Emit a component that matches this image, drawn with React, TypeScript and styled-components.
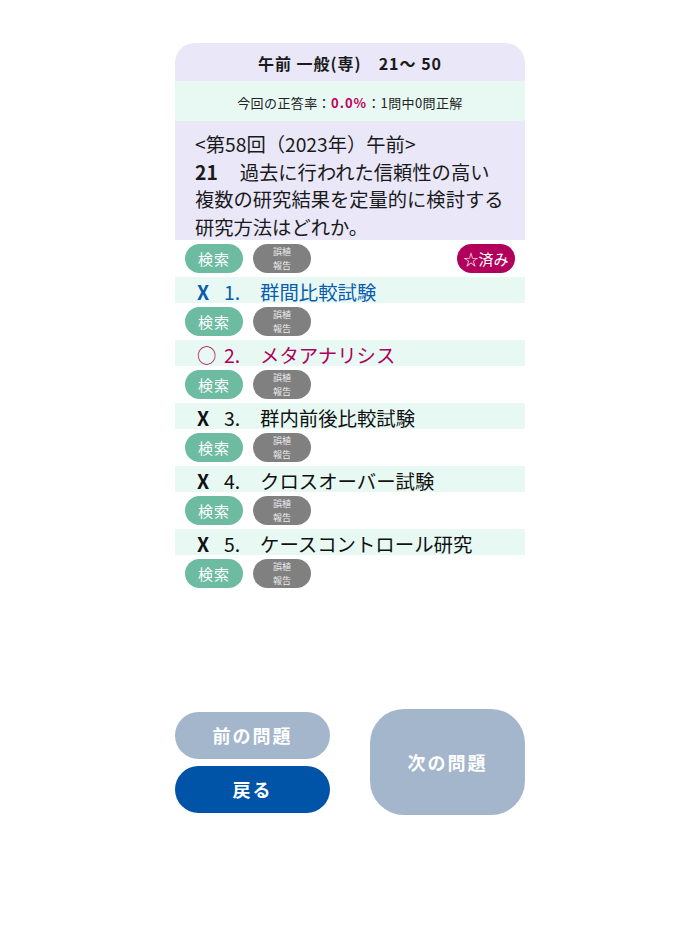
import React from "react";
import styled, {createGlobalStyle} from "styled-components";

const GlobalStyle = createGlobalStyle`
  body {
    margin: 0;
    background: #ffffff;
    font-family: "Noto Sans CJK JP", "Noto Sans", sans-serif;
    color: #111111;
  }
`;

type Choice = {no: number; text: string; mark: string; tone: "wrong" | "right" | "plain"};

const choices: Choice[] = [
    {no: 1, text: "群間比較試験", mark: "X", tone: "wrong"},
    {no: 2, text: "メタアナリシス", mark: "○", tone: "right"},
    {no: 3, text: "群内前後比較試験", mark: "X", tone: "plain"},
    {no: 4, text: "クロスオーバー試験", mark: "X", tone: "plain"},
    {no: 5, text: "ケースコントロール研究", mark: "X", tone: "plain"},
];

const toneColor = {wrong: "#0b5cad", right: "#b0005b", plain: "#111111"};

function ToolRow({done}: {done?: boolean}) {
    return (
        <Tools>
            <SearchButton>検索</SearchButton>
            <ReportButton>誤植<br/>報告</ReportButton>
            {done && <DoneBadge>☆済み</DoneBadge>}
        </Tools>
    );
}

export default function App() {
    return (
        <Page>
            <GlobalStyle/>
            <Card>
                <Header>午前 一般(専)　21～ 50</Header>
                <Rate>今回の正答率：<RateValue>0.0%</RateValue>：1問中0問正解</Rate>
                <Question>
                    <div>&lt;第58回（2023年）午前&gt;</div>
                    <div><QNo>21</QNo>過去に行われた信頼性の高い</div>
                    <div>複数の研究結果を定量的に検討する</div>
                    <div>研究方法はどれか。</div>
                </Question>
                <ToolRow done/>
                {choices.map((c) => (
                    <React.Fragment key={c.no}>
                        <Answer color={toneColor[c.tone]}>
                            <Mark $heavy={c.mark === "X"}>{c.mark}</Mark>
                            <span>{c.no}.</span>
                            <span>{c.text}</span>
                        </Answer>
                        <ToolRow/>
                    </React.Fragment>
                ))}
            </Card>
            <Nav>
                <NavColumn>
                    <NavButton>前の問題</NavButton>
                    <NavButton $primary>戻る</NavButton>
                </NavColumn>
                <NextButton>次の問題</NextButton>
            </Nav>
        </Page>
    );
}

const Page = styled.div`
  width: 350px;
  margin: 0 auto;
  padding-top: 43px;
`;

const Card = styled.div`
  display: flex;
  flex-direction: column;
  gap: 4px;
`;

const Header = styled.div`
  height: 38px;
  padding-top: 2px;
  box-sizing: border-box;
  display: flex;
  align-items: center;
  justify-content: center;
  background: #e9e7f8;
  border-radius: 20px 20px 0 0;
  font-size: 16px;
  font-weight: 700;
  letter-spacing: 1px;
  color: #1a1a1a;
`;

const Rate = styled.div`
  height: 40px;
  margin-top: -4px;
  padding-top: 2px;
  box-sizing: border-box;
  display: flex;
  align-items: center;
  justify-content: center;
  background: #e8f9f4;
  font-size: 13px;
  letter-spacing: 0.4px;
  color: #222222;
`;

const RateValue = styled.span`
  color: #c0005f;
  font-weight: 700;
  letter-spacing: 1px;
`;

const Question = styled.div`
  margin-top: -4px;
  height: 119px;
  box-sizing: border-box;
  padding: 10px 20px 0;
  background: #e9e7f8;
  font-size: 19.3px;
  line-height: 27.5px;
  color: #1a1a1a;
`;

const QNo = styled.span`
  font-weight: 700;
  margin-right: 22px;
`;

const Tools = styled.div`
  height: 29px;
  display: flex;
  align-items: center;
  gap: 10px;
  padding: 0 10px;
`;

const Pill = styled.div`
  width: 58px;
  height: 29px;
  border-radius: 15px;
  display: flex;
  align-items: center;
  justify-content: center;
  color: #ffffff;
`;

const SearchButton = styled(Pill)`
  background: #6dbba1;
  font-size: 15px;
  letter-spacing: 1px;
`;

const ReportButton = styled(Pill)`
  background: #808080;
  font-size: 9px;
  line-height: 14px;
  text-align: center;
  color: #ececec;
`;

const DoneBadge = styled(Pill)`
  margin-left: auto;
  background: #b0005b;
  font-size: 15px;
`;

const Answer = styled.div<{color: string}>`
  height: 26px;
  display: grid;
  grid-template-columns: 27px 36px 1fr;
  align-items: center;
  padding-left: 22px;
  background: #e8f9f4;
  font-size: 19.4px;
  color: ${(p) => p.color};
`;

const Mark = styled.span<{$heavy?: boolean}>`
  font-weight: ${(p) => (p.$heavy ? 700 : 400)};
`;

const Nav = styled.div`
  margin-top: 121px;
  display: flex;
  justify-content: space-between;
  align-items: center;
`;

const NavColumn = styled.div`
  display: flex;
  flex-direction: column;
  gap: 7px;
`;

const NavButton = styled.div<{$primary?: boolean}>`
  width: 155px;
  height: 47px;
  border-radius: 24px;
  display: flex;
  align-items: center;
  justify-content: center;
  background: ${(p) => (p.$primary ? "#0054a8" : "#a3b6cc")};
  color: #ffffff;
  font-size: 18px;
  font-weight: 700;
  letter-spacing: 2px;
`;

const NextButton = styled.div`
  width: 155px;
  height: 106px;
  border-radius: 34px;
  display: flex;
  align-items: center;
  justify-content: center;
  background: #a3b6cc;
  color: #ffffff;
  font-size: 18px;
  font-weight: 700;
  letter-spacing: 2px;
`;
